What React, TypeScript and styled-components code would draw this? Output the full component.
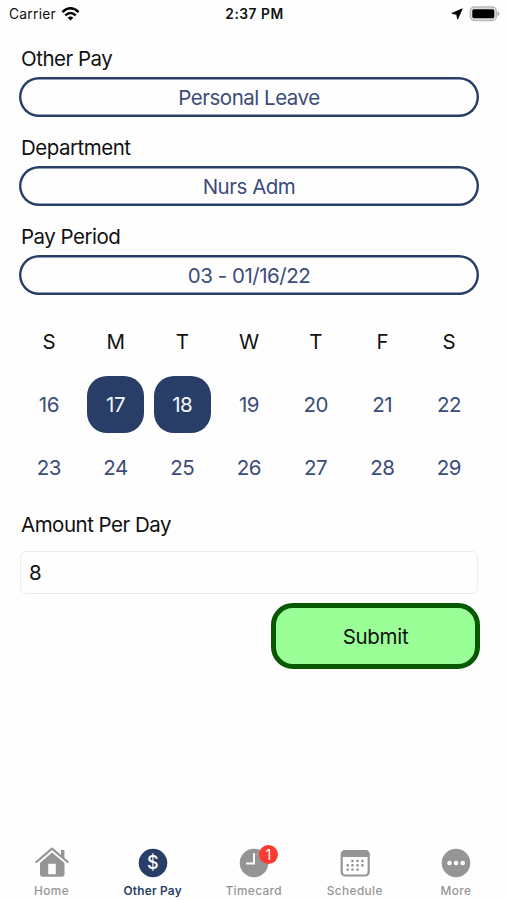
import React from "react";
import styled, { createGlobalStyle } from "styled-components";

const NAVY = "#283e66";
const GRAY = "#959595";

const GlobalStyle = createGlobalStyle`
  * { box-sizing: border-box; }
  body { margin: 0; background: #fefefe; }
  button, input { font: inherit; letter-spacing: inherit; margin: 0; }
`;

const Screen = styled.div`
  width: 507px;
  height: 900px;
  display: flex;
  flex-direction: column;
  overflow: hidden;
  background: #fefefe;
  color: #111;
  font-family: Inter, "Liberation Sans", sans-serif;
  font-size: 20.5px;
  letter-spacing: -0.3px;
`;

const StatusBar = styled.header`
  height: 28px;
  padding: 0 7px 0 9px;
  display: grid;
  grid-template-columns: 1fr auto 1fr;
  align-items: center;
  font-size: 13.8px;
  letter-spacing: 0.25px;
`;

const StatusGroup = styled.div<{ $end?: boolean }>`
  display: flex;
  align-items: center;
  justify-content: ${(p) => (p.$end ? "flex-end" : "flex-start")};
  gap: ${(p) => (p.$end ? 6 : 5)}px;
`;

const Clock = styled.time`
  font-weight: 600;
  letter-spacing: 0.5px;
`;

const Form = styled.main`
  flex: 1;
  display: flex;
  flex-direction: column;
  padding: 17px 28px 0 19px;
`;

const Field = styled.div`
  height: 89px;
`;

const Label = styled.label<{ $gap?: number }>`
  display: block;
  height: 28px;
  line-height: 28px;
  padding-left: 2px;
  margin-bottom: ${(p) => p.$gap ?? 4}px;
  letter-spacing: -0.5px;
`;

const Picker = styled.button`
  display: block;
  width: 460px;
  height: 40px;
  padding: 0;
  border: 0;
  border-radius: 20px;
  box-shadow: inset 0 0 0 2.4px ${NAVY};
  background: #fefefe;
  color: #3c4c78;
  letter-spacing: -0.48px;
`;

const Calendar = styled.div`
  display: grid;
  grid-template-columns: repeat(7, 66.7px);
  grid-template-rows: 63px 63px 63px;
  place-items: center;
  margin: -2px 0 0 -3.5px;
`;

const Weekday = styled.span``;

const Day = styled.button<{ $selected: boolean }>`
  width: 57px;
  height: 57px;
  padding: 0;
  border: 0;
  border-radius: 20px;
  background: ${(p) => (p.$selected ? NAVY : "transparent")};
  color: ${(p) => (p.$selected ? "#f4f7fc" : "#3c4c78")};
  letter-spacing: -0.5px;
`;

const AmountField = styled.div`
  margin-top: 12px;
`;

const AmountInput = styled.input`
  display: block;
  width: 458px;
  height: 43px;
  margin-left: 1px;
  padding: 0 8px;
  border: 1px solid #ececec;
  border-radius: 6px;
  background: #fefefe;
  color: #111;
  outline: none;
`;

const SubmitButton = styled.button`
  align-self: flex-end;
  width: 209px;
  height: 66px;
  margin: 9px -1px 0 0;
  border: 5px solid #075800;
  border-radius: 22px;
  background: #9bff98;
  color: #111;
`;

const TabBar = styled.nav`
  display: grid;
  grid-template-columns: repeat(5, 101.1px);
  height: 56px;
  padding-left: 1px;
`;

const Tab = styled.a<{ $active?: boolean }>`
  display: flex;
  flex-direction: column;
  align-items: center;
  color: ${(p) => (p.$active ? NAVY : GRAY)};
  font-size: 11.8px;
  font-weight: ${(p) => (p.$active ? 600 : 500)};
  letter-spacing: ${(p) => (p.$active ? 0.25 : 0.4)}px;
  line-height: 16px;
  gap: 3px;
`;

const IconSlot = styled.span`
  position: relative;
  display: block;
  width: 36px;
  height: 36px;
  svg { display: block; }
`;

const Badge = styled.span`
  position: absolute;
  left: 23px;
  top: 1px;
  width: 19px;
  height: 19px;
  border-radius: 50%;
  background: #fc3b30;
  color: #fff;
  font-size: 14px;
  font-weight: 400;
  line-height: 19px;
  letter-spacing: 0;
  text-align: center;
`;

const DollarMark = styled.text`
  font: 500 18px Inter, sans-serif;
`;

const WifiIcon = () => (
  <svg width="19" height="14" viewBox="0 0 18 14" fill="none" stroke="#000" strokeWidth="2.4">
    <path d="M.9 5.1Q9-2.4 17.1 5.1" />
    <path d="M3.8 8.3Q9 3.7 14.2 8.3" />
    <path d="M6.2 10.7Q9 8.4 11.8 10.7L9 13.5Z" fill="#000" stroke="none" />
  </svg>
);

const LocationIcon = () => (
  <svg width="12" height="12" viewBox="0 0 12 12">
    <path d="M11.2.8L.9 5.4 5.7 6.3 6.6 11.1Z" fill="#000" stroke="#000" strokeWidth=".9" strokeLinejoin="round" />
  </svg>
);

const BatteryIcon = () => (
  <svg width="31" height="16" viewBox="0 0 31 16">
    <rect x="1.3" y="1" width="26" height="13.5" rx="4" fill="#e0e0e0" stroke="#b7b7b7" strokeWidth="1.4" />
    <rect x="3.3" y="3.2" width="22" height="9" rx="1.6" fill="#000" />
    <path d="M28.5 5.2Q30.5 6 30.5 7.8T28.5 10.4Z" fill="#aaa" />
  </svg>
);

const HomeIcon = () => (
  <svg width="36" height="36" viewBox="0 0 36 36" fill={GRAY}>
    <path d="M2.3 18L18 4.6 33.7 18" fill="none" stroke={GRAY} strokeWidth="2.2" strokeLinecap="round" strokeLinejoin="round" />
    <path d="M27 6h3.4v9l-3.4-2.9Z" />
    <path fillRule="evenodd" d="M18 8.4L30.5 19V30Q30.5 32.7 27.8 32.7H8.7Q6 32.7 6 30V19ZM14.2 19.8V30.3H21.8V19.8Z" />
  </svg>
);

const DollarIcon = () => (
  <svg width="36" height="36" viewBox="0 0 36 36">
    <circle cx="18" cy="19" r="14.3" fill={NAVY} />
    <DollarMark x="18" y="25.3" textAnchor="middle" fill="#fff">$</DollarMark>
  </svg>
);

const ClockIcon = () => (
  <svg width="36" height="36" viewBox="0 0 36 36">
    <circle cx="18" cy="19" r="14.3" fill={GRAY} />
    <path d="M18 9.3V19.5H10.2" fill="none" stroke="#fff" strokeWidth="1.9" />
  </svg>
);

const DOTS = [
  [15.5, 17], [20.5, 17], [25.5, 17],
  [10.7, 21.3], [15.5, 21.3], [20.5, 21.3], [25.5, 21.3],
  [10.7, 25.6], [15.5, 25.6], [20.5, 25.6],
];

const CalendarIcon = () => (
  <svg width="36" height="36" viewBox="0 0 36 36">
    <rect x="4.7" y="7.2" width="27" height="24.3" rx="3.5" fill="#fefefe" stroke={GRAY} strokeWidth="2.2" />
    <path d="M4 13V10Q4 6.2 8 6.2H28.5Q32.5 6.2 32.5 10V13Z" fill={GRAY} />
    {DOTS.map(([x, y]) => (
      <rect key={`${x}-${y}`} x={x - 1.2} y={y - 1.2} width="2.4" height="2.4" rx=".6" fill={GRAY} />
    ))}
  </svg>
);

const MoreIcon = () => (
  <svg width="36" height="36" viewBox="0 0 36 36">
    <circle cx="18" cy="19" r="14.3" fill={GRAY} />
    {[11.5, 18.1, 24.7].map((x) => (
      <circle key={x} cx={x} cy="19" r="2.3" fill="#fff" />
    ))}
  </svg>
);

const pickers = [
  { label: "Other Pay", value: "Personal Leave" },
  { label: "Department", value: "Nurs Adm" },
  { label: "Pay Period", value: "03 - 01/16/22" },
];
const weekdays = ["S", "M", "T", "W", "T", "F", "S"];
const days = Array.from({ length: 14 }, (_, i) => 16 + i);
const tabs = [
  { label: "Home", Icon: HomeIcon },
  { label: "Other Pay", Icon: DollarIcon, active: true },
  { label: "Timecard", Icon: ClockIcon, badge: 1 },
  { label: "Schedule", Icon: CalendarIcon },
  { label: "More", Icon: MoreIcon },
];

export default function App() {
  return (
    <>
      <GlobalStyle />
      <Screen>
        <StatusBar>
          <StatusGroup>
            <span>Carrier</span>
            <WifiIcon />
          </StatusGroup>
          <Clock>2:37 PM</Clock>
          <StatusGroup $end>
            <LocationIcon />
            <BatteryIcon />
          </StatusGroup>
        </StatusBar>
        <Form>
          {pickers.map((p) => (
            <Field key={p.label}>
              <Label>{p.label}</Label>
              <Picker>{p.value}</Picker>
            </Field>
          ))}
          <Calendar>
            {weekdays.map((d, i) => (
              <Weekday key={i}>{d}</Weekday>
            ))}
            {days.map((d) => (
              <Day key={d} $selected={d === 17 || d === 18}>{d}</Day>
            ))}
          </Calendar>
          <AmountField>
            <Label $gap={12} htmlFor="amount">Amount Per Day</Label>
            <AmountInput id="amount" defaultValue="8" />
          </AmountField>
          <SubmitButton>Submit</SubmitButton>
        </Form>
        <TabBar>
          {tabs.map(({ label, Icon, active, badge }) => (
            <Tab key={label} $active={active}>
              <IconSlot>
                <Icon />
                {badge && <Badge>{badge}</Badge>}
              </IconSlot>
              {label}
            </Tab>
          ))}
        </TabBar>
      </Screen>
    </>
  );
}
